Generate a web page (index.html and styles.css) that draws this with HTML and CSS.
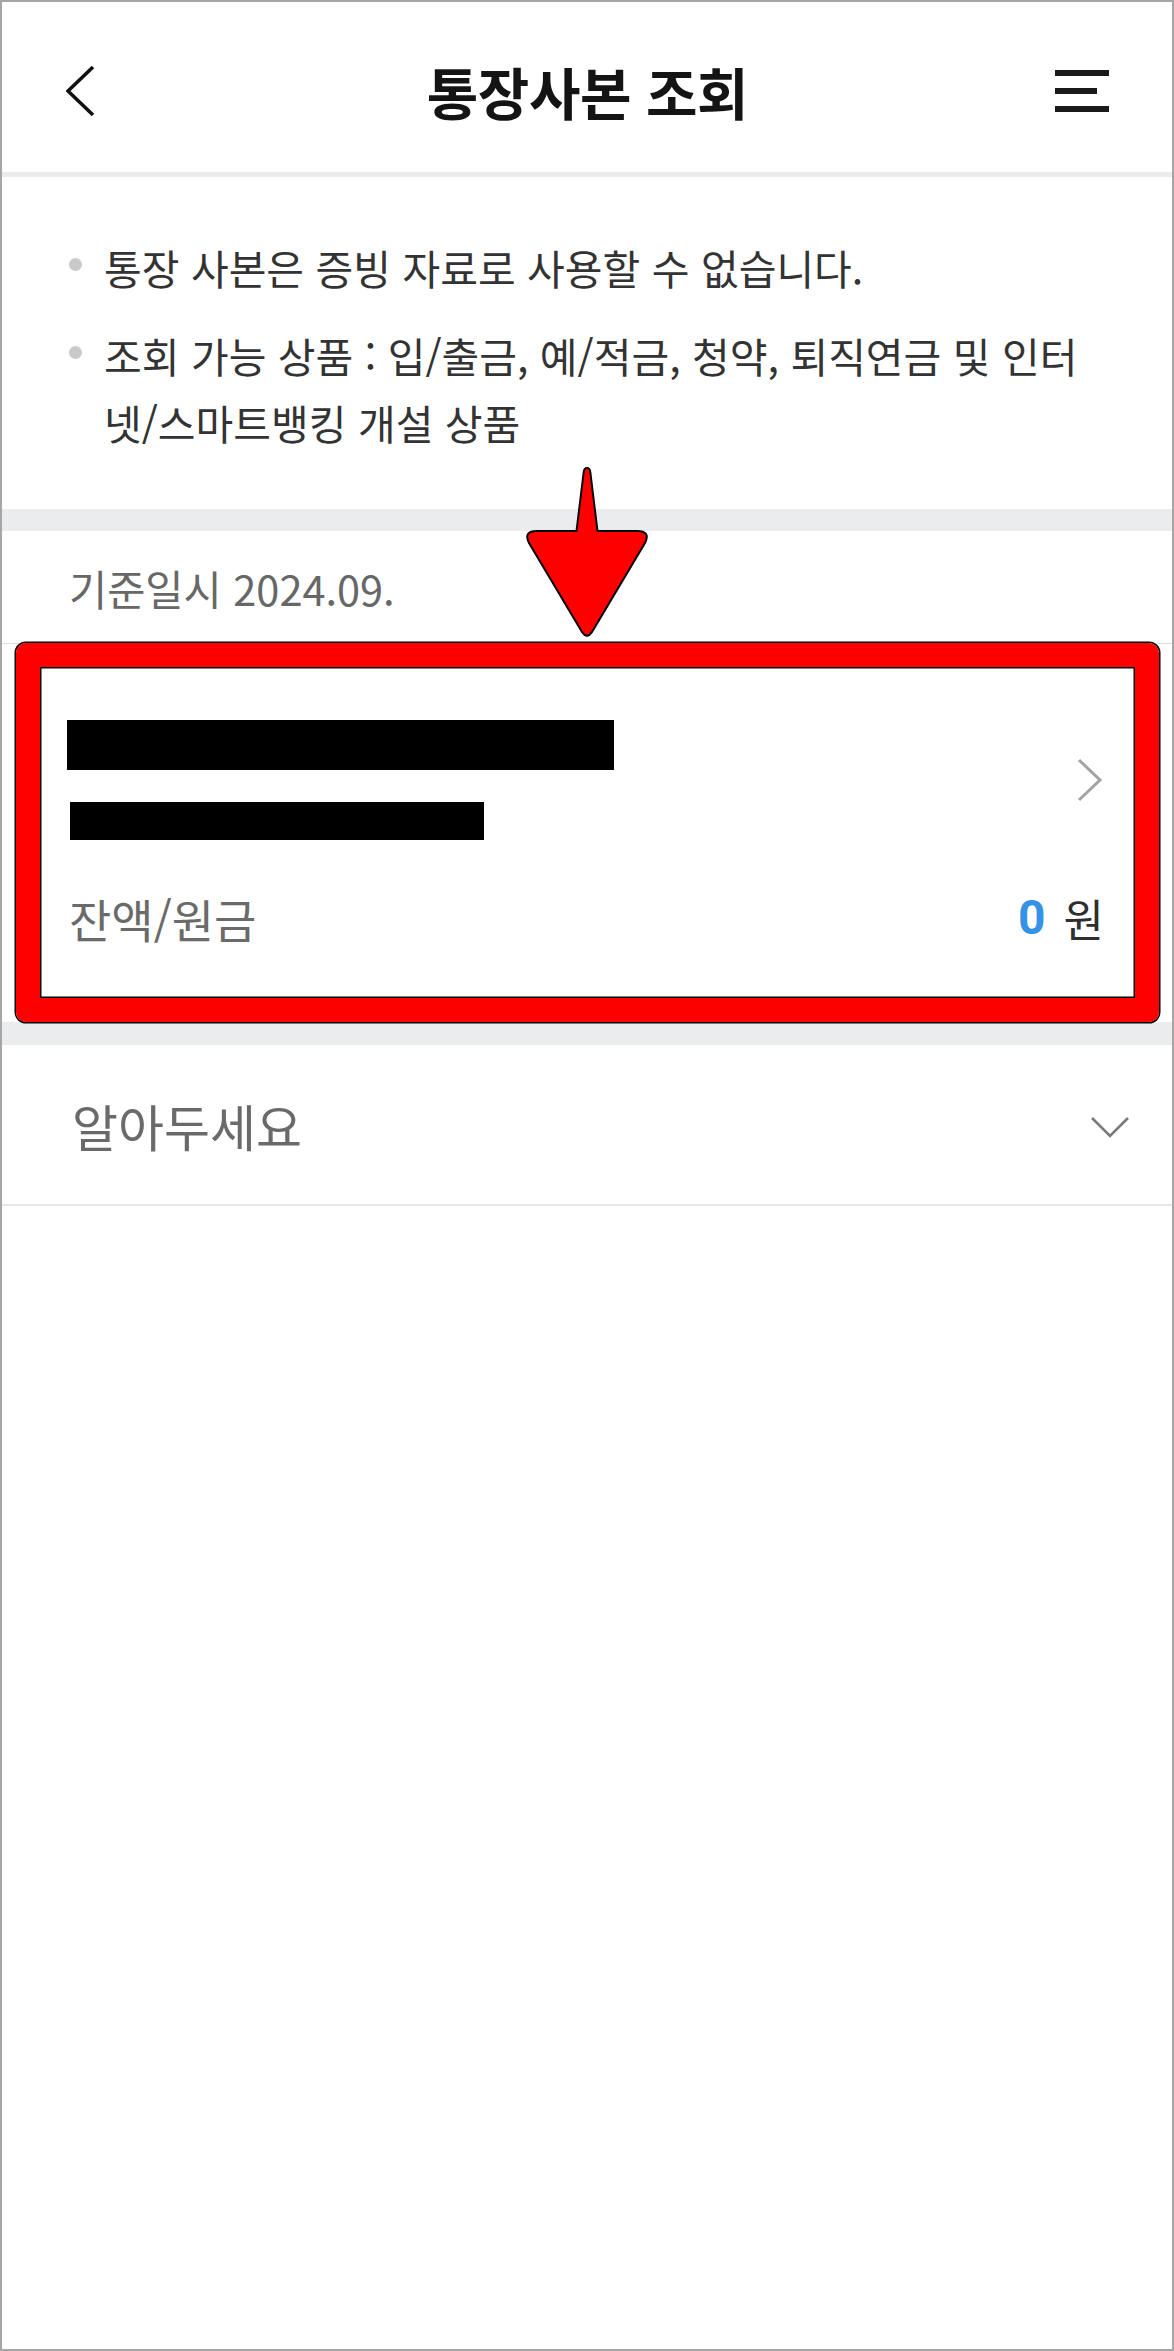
FILE: index.html
```html
<!DOCTYPE html>
<html lang="ko">
<head>
<meta charset="utf-8">
<title>통장사본 조회</title>
<link rel="stylesheet" href="styles.css">
</head>
<body>
<div class="screen">
  <header class="topbar">
    <button class="icon-btn back-btn" aria-label="뒤로">
      <svg width="30" height="52" viewBox="0 0 30 52"><polyline points="27,2 2,26 27,50" fill="none" stroke="#111" stroke-width="3.6" stroke-linejoin="miter"/></svg>
    </button>
    <h1 class="title">통장사본 조회</h1>
    <button class="icon-btn menu-btn" aria-label="메뉴">
      <svg width="54" height="42" viewBox="0 0 54 42"><rect x="0" y="0" width="54" height="6" fill="#1a1a1a"/><rect x="0" y="18" width="42" height="6" fill="#1a1a1a"/><rect x="0" y="36" width="54" height="6" fill="#1a1a1a"/></svg>
    </button>
  </header>

  <section class="notice">
    <ul class="notice-list">
      <li class="notice-item"><span class="dot"></span><p class="notice-text">통장 사본은 증빙 자료로 사용할 수 없습니다.</p></li>
      <li class="notice-item"><span class="dot"></span><p class="notice-text">조회 가능 상품 : 입/출금, 예/적금, 청약, 퇴직연금 및 인터<br>넷/스마트뱅킹 개설 상품</p></li>
    </ul>
  </section>

  <div class="band"></div>

  <div class="basis">기준일시 2024.09.</div>

  <section class="account-card">
    <div class="account-top">
      <div class="account-id">
        <div class="redact redact-name"></div>
        <div class="redact redact-number"></div>
      </div>
      <svg class="chev-right" width="26" height="44" viewBox="0 0 26 44"><polyline points="2,2 23,22 2,42" fill="none" stroke="#a3a3a3" stroke-width="3"/></svg>
    </div>
    <div class="balance-row">
      <span class="balance-label">잔액/원금</span>
      <span class="balance-amount"><strong class="amount">0</strong><span class="won">원</span></span>
    </div>
    <div class="highlight"></div>
  </section>

  <div class="band band-bottom"></div>

  <section class="accordion">
    <span class="accordion-title">알아두세요</span>
    <svg class="chev-down" width="40" height="24" viewBox="0 0 40 24"><polyline points="2,3 20,21 38,3" fill="none" stroke="#7a7a7a" stroke-width="2.6"/></svg>
  </section>

  <svg class="annotation-arrow" width="134" height="182" viewBox="0 0 134 182">
    <path d="M67 6 C69 6 70 7.5 70.3 10 L77.5 69 L117 69 Q131 69 125 81 L72 170 Q67 177.5 62 170 L9 81 Q3 69 17 69 L56.5 69 L63.7 10 C64 7.5 65 6 67 6 Z" fill="#ff0000" stroke="#000" stroke-width="2" stroke-linejoin="round"/>
  </svg>
</div>
</body>
</html>
```

FILE: styles.css
```css
* {
  box-sizing: border-box;
}

html, body {
  margin: 0;
  padding: 0;
  background: #ffffff;
}

body {
  font-family: "Noto Sans CJK KR", "Noto Sans", "Liberation Sans", sans-serif;
  color: #333333;
}

.screen {
  position: relative;
  width: 1174px;
  height: 2351px;
  border: 2px solid #a6a6a6;
  background: #ffffff;
  overflow: hidden;
}

/* Header */
.topbar {
  display: grid;
  grid-template-columns: 1fr auto 1fr;
  align-items: center;
  height: 175px;
  padding: 8px 63px 0 64px;
  border-bottom: 5px solid #ebebeb;
}

.icon-btn {
  border: 0;
  background: transparent;
  padding: 0;
  margin: 0;
  display: flex;
  align-items: center;
}

.back-btn {
  justify-self: start;
}

.menu-btn {
  justify-self: end;
}

.title {
  margin: 0;
  font-size: 56px;
  font-weight: 700;
  color: #141414;
  line-height: 1;
  letter-spacing: -0.5px;
}

/* Notice */
.notice {
  padding: 57px 40px 53px 67px;
}

.notice-list {
  list-style: none;
  margin: 0;
  padding: 0;
  display: flex;
  flex-direction: column;
  gap: 21px;
}

.notice-item {
  display: flex;
  align-items: flex-start;
}

.dot {
  flex: none;
  width: 13px;
  height: 13px;
  border-radius: 50%;
  background: #c9c9c9;
  margin-top: 24px;
  margin-right: 22px;
}

.notice-text {
  margin: 0;
  font-size: 41px;
  line-height: 67px;
  color: #333333;
  white-space: nowrap;
}

.band {
  height: 22px;
  background: #ebeced;
}

.band-bottom {
  height: 23px;
}

/* Basis date */
.basis {
  height: 113px;
  display: flex;
  align-items: center;
  padding-left: 67px;
  padding-top: 2px;
  font-size: 41.5px;
  color: #676767;
  border-bottom: 1px solid #dedede;
}

/* Account card */
.account-card {
  position: relative;
  padding: 76px 68px 74px 65px;
}

.account-top {
  display: flex;
  align-items: center;
  justify-content: space-between;
}

.account-id {
  display: flex;
  flex-direction: column;
  gap: 32px;
}

.redact {
  background: #000000;
}

.redact-name {
  width: 547px;
  height: 50px;
}

.redact-number {
  width: 414px;
  height: 38px;
  margin-left: 3px;
}

.chev-right {
  display: block;
  margin-right: 1px;
}

.balance-row {
  margin-top: 48px;
  height: 60px;
  display: flex;
  align-items: center;
  justify-content: space-between;
}

.balance-label {
  font-size: 46px;
  line-height: 60px;
  color: #6a6a6a;
  padding-left: 2px;
}

.balance-amount {
  display: flex;
  align-items: center;
  line-height: 60px;
}

.amount {
  font-size: 48px;
  font-weight: 700;
  color: #3593e6;
  margin-right: 18px;
  font-family: "Roboto", "Noto Sans", sans-serif;
}

.won {
  font-size: 44px;
  color: #2e2e2e;
}

.highlight {
  position: absolute;
  top: -1px;
  bottom: 0;
  left: 14px;
  right: 13px;
  border: 24px solid #ff0000;
  border-radius: 10px;
  box-shadow: 0 0 0 1.5px #000000, inset 0 0 0 1.5px #000000;
  pointer-events: none;
}

/* Accordion */
.accordion {
  height: 161px;
  display: flex;
  align-items: center;
  justify-content: space-between;
  padding: 0 42px 0 70px;
  border-bottom: 2px solid #e8e8e8;
}

.accordion-title {
  font-size: 50px;
  color: #6a6a6a;
}

.chev-down {
  display: block;
  margin-top: 4px;
}

/* Annotation arrow overlay */
.annotation-arrow {
  position: absolute;
  left: 518px;
  top: 460px;
}
```
